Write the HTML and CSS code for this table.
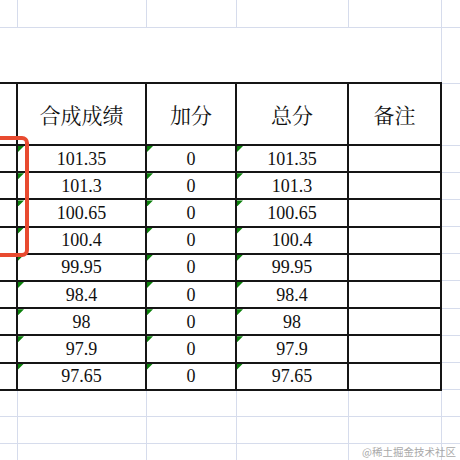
FILE: index.html
```html
<!DOCTYPE html>
<html lang="zh-CN">
<head>
<meta charset="utf-8">
<link rel="stylesheet" href="styles.css">
</head>
<body>
<div class="sheet">
<table class="grid">
  <colgroup>
    <col class="c0"><col class="c1"><col class="c2"><col class="c3"><col class="c4"><col class="c5">
  </colgroup>
  <tr class="r-top"><td></td><td></td><td></td><td></td><td></td><td></td></tr>
  <tr class="r-title"><td colspan="5"></td><td></td></tr>
  <tr class="r-head">
    <td class="b"></td><td class="b">合成成绩</td><td class="b">加分</td><td class="b">总分</td><td class="b">备注</td><td></td>
  </tr>
  <tr class="r"><td class="b"></td><td class="b m">101.35</td><td class="b m">0</td><td class="b m">101.35</td><td class="b"></td><td></td></tr>
  <tr class="r"><td class="b"></td><td class="b m">101.3</td><td class="b m">0</td><td class="b m">101.3</td><td class="b"></td><td></td></tr>
  <tr class="r"><td class="b"></td><td class="b m">100.65</td><td class="b m">0</td><td class="b m">100.65</td><td class="b"></td><td></td></tr>
  <tr class="r"><td class="b"></td><td class="b m">100.4</td><td class="b m">0</td><td class="b m">100.4</td><td class="b"></td><td></td></tr>
  <tr class="r"><td class="b"></td><td class="b m">99.95</td><td class="b m">0</td><td class="b m">99.95</td><td class="b"></td><td></td></tr>
  <tr class="r"><td class="b"></td><td class="b m">98.4</td><td class="b m">0</td><td class="b m">98.4</td><td class="b"></td><td></td></tr>
  <tr class="r"><td class="b"></td><td class="b m">98</td><td class="b m">0</td><td class="b m">98</td><td class="b"></td><td></td></tr>
  <tr class="r"><td class="b"></td><td class="b m">97.9</td><td class="b m">0</td><td class="b m">97.9</td><td class="b"></td><td></td></tr>
  <tr class="r"><td class="b"></td><td class="b m">97.65</td><td class="b m">0</td><td class="b m">97.65</td><td class="b"></td><td></td></tr>
  <tr class="r-empty"><td></td><td></td><td></td><td></td><td></td><td></td></tr>
  <tr class="r-empty"><td></td><td></td><td></td><td></td><td></td><td></td></tr>
  <tr class="r-empty"><td></td><td></td><td></td><td></td><td></td><td></td></tr>
</table>
<div class="bracket"></div>
<div class="watermark">@稀土掘金技术社区</div>
</div>
</body>
</html>
```

FILE: styles.css
```css
html, body {
  margin: 0;
  padding: 0;
  background: #ffffff;
}
body {
  width: 460px;
  height: 460px;
  overflow: hidden;
}
.sheet {
  position: relative;
  width: 460px;
  height: 460px;
  overflow: hidden;
}
.grid {
  border-collapse: collapse;
  table-layout: fixed;
  width: 501px;
  font-family: "Liberation Serif", "Noto Serif CJK SC", "Noto Sans CJK SC", serif;
  color: #111111;
}
.c0 { width: 17px; }
.c1 { width: 129px; }
.c2 { width: 90px; }
.c3 { width: 112px; }
.c4 { width: 93px; }
.c5 { width: 60px; }
.grid td {
  border: 1px solid #d6dcec;
  padding: 0;
  text-align: center;
  vertical-align: middle;
  position: relative;
}
.grid tr:first-child td { border-top: none; }
.grid td:first-child { border-left: none; }
.r-top { height: 27px; }
.r-title { height: 56px; }
.r-head { height: 62px; }
.r { height: 27.2px; }
.r-empty { height: 27px; }
.grid td.b {
  border: 2px solid #151515;
}
.grid td.b:first-child { border-left: none; }
.r-head td {
  font-size: 21px;
  font-family: "Noto Serif CJK SC", "Noto Sans CJK SC", serif;
}
.grid td.m {
  font-family: "Liberation Serif", "Times New Roman", "DejaVu Serif", serif;
  font-size: 18px;
  line-height: 20px;
}
.grid td.m::before {
  content: "";
  position: absolute;
  left: 0;
  top: 0;
  width: 6px;
  height: 6px;
  background: #0b800b;
  clip-path: polygon(0 0, 100% 0, 0 100%);
}
.bracket {
  position: absolute;
  left: -12px;
  top: 136px;
  width: 33px;
  height: 113px;
  border: 4px solid #e84a2f;
  border-radius: 7px;
}
.watermark {
  position: absolute;
  right: 4px;
  bottom: 2px;
  font-family: "Noto Sans CJK SC", sans-serif;
  font-size: 10.5px;
  line-height: 12px;
  color: #a9a9a9;
}
```
